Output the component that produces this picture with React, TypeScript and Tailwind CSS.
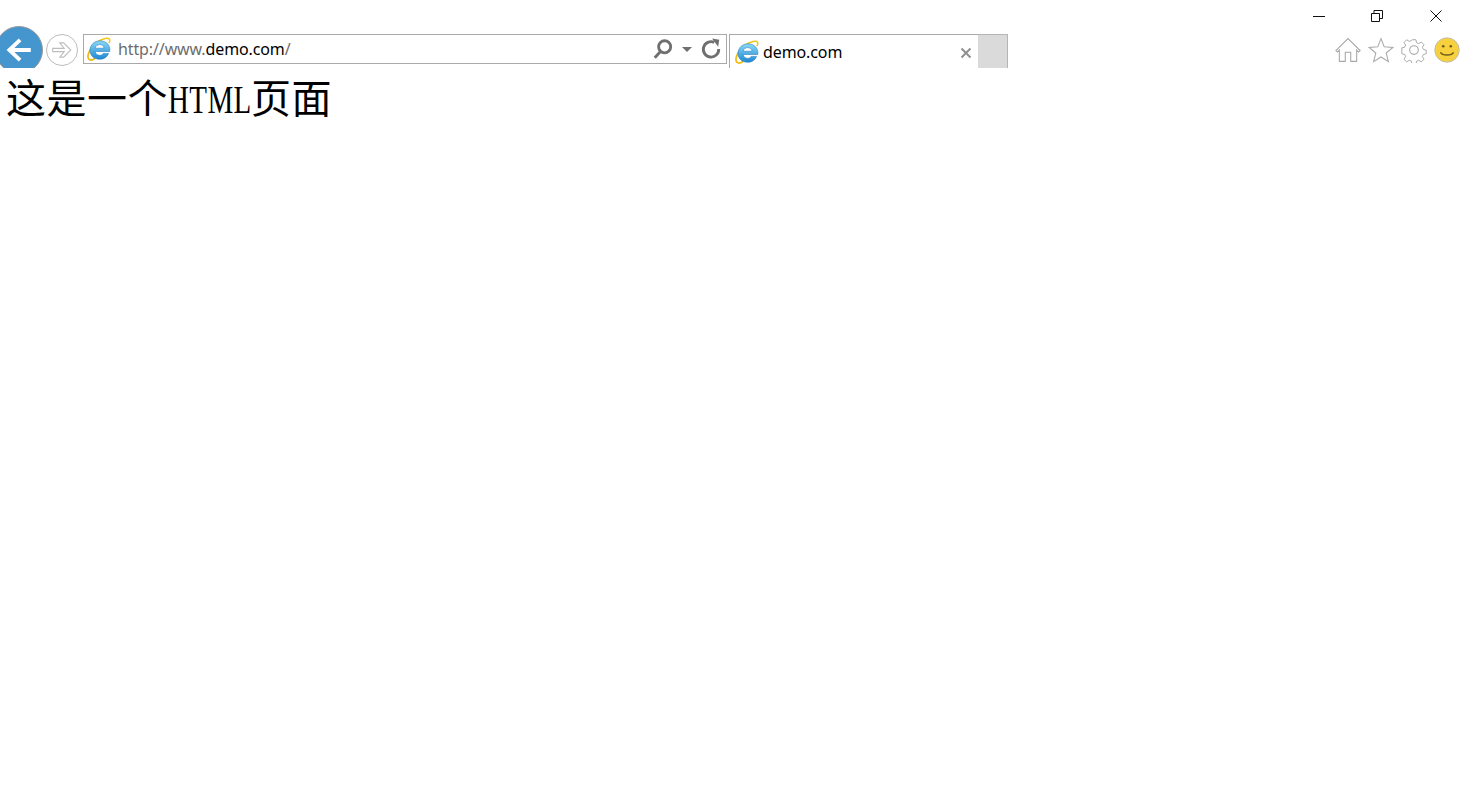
const sans = { fontFamily: '"Noto Sans", "Open Sans", sans-serif' };

function IeLogo({ className }: { className: string }) {
  return (
    <svg viewBox="0 0 24 24" className={className}>
      <defs>
        <linearGradient id="ieBlue" x1="0" y1="0" x2="0" y2="1">
          <stop offset="0" stopColor="#8ad8f7" />
          <stop offset="1" stopColor="#1e88d2" />
        </linearGradient>
      </defs>
      <path
        d="M2.500 14C6 7.500 12 3 18 1.500c3-.7 5 0 4.800 2-.1 1-.5 1.800-1 2.700"
        fill="none"
        stroke="#f5c518"
        strokeWidth="1.500"
      />
      <path
        d="M4 11.500C1 16.500.4 20.500 1.800 22.200c1.300 1.300 4.200.7 6.500-1"
        fill="none"
        stroke="#f2b90f"
        strokeWidth="1.700"
      />
      <path
        d="M13 3.800C7.300 3.800 3 8 3 13.300s4 9 9.500 9c4.400 0 7.700-2.200 9.100-5.900h-5.300c-.9 1.300-2.100 1.900-3.700 1.900-2.400 0-4.100-1.400-4.400-3.800H22.800C23.700 8.300 19.200 3.800 13 3.800zm-4.800 7.400c.4-2.200 2.300-3.600 4.500-3.600s4.100 1.400 4.400 3.600z"
        fill="url(#ieBlue)"
        stroke="#1673b8"
        strokeWidth="0.500"
      />
    </svg>
  );
}

function ToolIcon({ children }: { children: React.ReactNode }) {
  return (
    <svg viewBox="0 0 24 24" className="w-[26px] h-[26px]" fill="none" stroke="#a9a9a9" strokeWidth="1">
      {children}
    </svg>
  );
}

export default function App() {
  return (
    <div className="w-[1460px] h-[811px] bg-white overflow-hidden">
      <div className="h-[26px] flex justify-end items-start gap-[47px] pr-[18px] pt-[10px]">
        <svg viewBox="0 0 12 12" className="w-[12px] h-[12px] -mr-px" fill="none" stroke="#111" strokeWidth="1">
          <path d="M0 6.500h12" />
        </svg>
        <svg viewBox="0 0 12 12" className="w-[12px] h-[12px]" fill="none" stroke="#111" strokeWidth="1">
          <path d="M.5 3.500h8v8h-8zM3 3.500V.5h8.500v8H8.500" />
        </svg>
        <svg viewBox="0 0 12 12" className="w-[12px] h-[12px]" fill="none" stroke="#111" strokeWidth="1">
          <path d="M.5.5l11 11M11.500.5l-11 11" />
        </svg>
      </div>

      <div className="h-[42px] flex items-start overflow-hidden" style={sans}>
        <div className="w-[48px] h-[48px] shrink-0 -ml-[5px] rounded-full bg-[#4596cf] border border-[#9a9a9a] flex items-center justify-center">
          <svg viewBox="0 0 28 28" className="w-[30px] h-[30px]" fill="none" stroke="#fff" strokeWidth="3.600">
            <path d="M25 14H6M15 4.500L5 14l10 9.500" />
          </svg>
        </div>
        <div className="w-[32px] h-[32px] shrink-0 ml-[3px] mt-[8px] rounded-full border border-[#bdbdbd] flex items-center justify-center">
          <svg viewBox="0 0 20 20" className="w-[22px] h-[22px]" fill="none" stroke="#bdbdbd" strokeWidth="1">
            <path d="M1.500 8.500h10.500L8 3.500h3.500L18 10l-6.500 6.500H8l4-5H1.500z" />
          </svg>
        </div>

        <div className="w-[644px] h-[30px] shrink-0 ml-[5px] mt-[8px] border border-[#a9a9a9] flex items-center">
          <IeLogo className="w-[24px] h-[24px] ml-[3px]" />
          <span className="ml-[7px] text-[16px] tracking-[-0.12px] text-[#6d6d6d] leading-none">
            http://www.<span className="text-black">demo.com</span>/
          </span>
          <div className="ml-auto flex items-center">
            <svg viewBox="0 0 20 20" className="w-[22px] h-[22px]" fill="none" stroke="#6f6f6f" strokeWidth="2.600">
              <circle cx="11.500" cy="8" r="5.500" />
              <path d="M7.500 12.500L2.500 18" />
            </svg>
            <div className="ml-[8px] w-0 h-0 border-x-[5px] border-x-transparent border-t-[5px] border-t-[#6f6f6f]" />
            <svg viewBox="0 0 20 20" className="ml-[8px] mr-[4px] w-[22px] h-[22px]" fill="none" stroke="#6f6f6f" strokeWidth="2.600">
              <path d="M13 4A7 7 0 1 0 17 10" />
              <path d="M11 0.500l6.500 1-1 6.500z" fill="#6f6f6f" stroke="none" />
            </svg>
          </div>
        </div>

        <div className="w-[249px] h-[34px] shrink-0 ml-[2px] mt-[8px] border-l border-t border-[#a9a9a9] flex items-center">
          <IeLogo className="w-[24px] h-[24px] ml-[5px]" />
          <span className="ml-[4px] text-[16px] tracking-[-0.1px] text-black leading-none">demo.com</span>
          <svg viewBox="0 0 12 12" className="ml-auto mr-[6px] mt-[2px] w-[12px] h-[12px]" fill="none" stroke="#8f8f8f" strokeWidth="2">
            <path d="M1.500 1.500l9 9M10.500 1.500l-9 9" />
          </svg>
        </div>
        <div className="w-[30px] h-[34px] shrink-0 mt-[8px] bg-[#dadada] border-t border-r border-[#b5b5b5]" />

        <div className="ml-auto mt-[11px] flex items-center gap-[7px]">
          <ToolIcon>
            <path d="M.8 12.500L12 1.500l11.200 11-1.400 1.300-1.800-1.700V22.500h-5.500V14h-5v8.500H4V12.100l-1.800 1.700z" />
          </ToolIcon>
          <ToolIcon>
            <path d="M12 1.500l3 7.600 8 .6-6.200 5.100 2 7.900L12 18.400l-6.800 4.300 2-7.900L1 9.700l8-.6z" />
          </ToolIcon>
          <ToolIcon>
            <circle cx="12" cy="12" r="4" />
            <path d="M10 1.500h4l.6 3 2.300 1 2.600-1.700 2.800 2.800-1.700 2.600 1 2.300 2.900.6v3.800l-2.900.6-1 2.300 1.700 2.600-2.800 2.800-2.600-1.700-2.300 1-.6 3h-4l-.6-3-2.300-1-2.600 1.700-2.800-2.800 1.700-2.600-1-2.300-2.900-.6V9.800l2.900-.6 1-2.300-1.700-2.600 2.800-2.800 2.600 1.700 2.300-1z" transform="translate(1.200 1.200) scale(.9)" />
          </ToolIcon>
          <svg viewBox="0 0 24 24" className="w-[26px] h-[26px]">
            <circle cx="12" cy="12" r="11.300" fill="#f6d13d" stroke="#b9b9b9" strokeWidth="0.800" />
            <circle cx="8.500" cy="8.500" r="1.200" fill="#6b5a1e" />
            <circle cx="15.500" cy="8.500" r="1.200" fill="#6b5a1e" />
            <path d="M6 14c1.500 3.500 10.500 3.500 12 0" fill="none" stroke="#6b5a1e" strokeWidth="1.300" />
          </svg>
        </div>
      </div>

      <h1
        className="pl-[6px] h-[44px] mt-[10px] flex items-center text-[40px] tracking-[0.5px] font-normal text-black leading-none whitespace-nowrap"
        style={{ fontFamily: '"Liberation Serif", "Noto Sans CJK SC", serif' }}
      >
        这是一个
        <span className="inline-block w-[83px]">
          <span className="inline-block origin-left scale-x-[0.725]">HTML</span>
        </span>
        页面
      </h1>
    </div>
  );
}
